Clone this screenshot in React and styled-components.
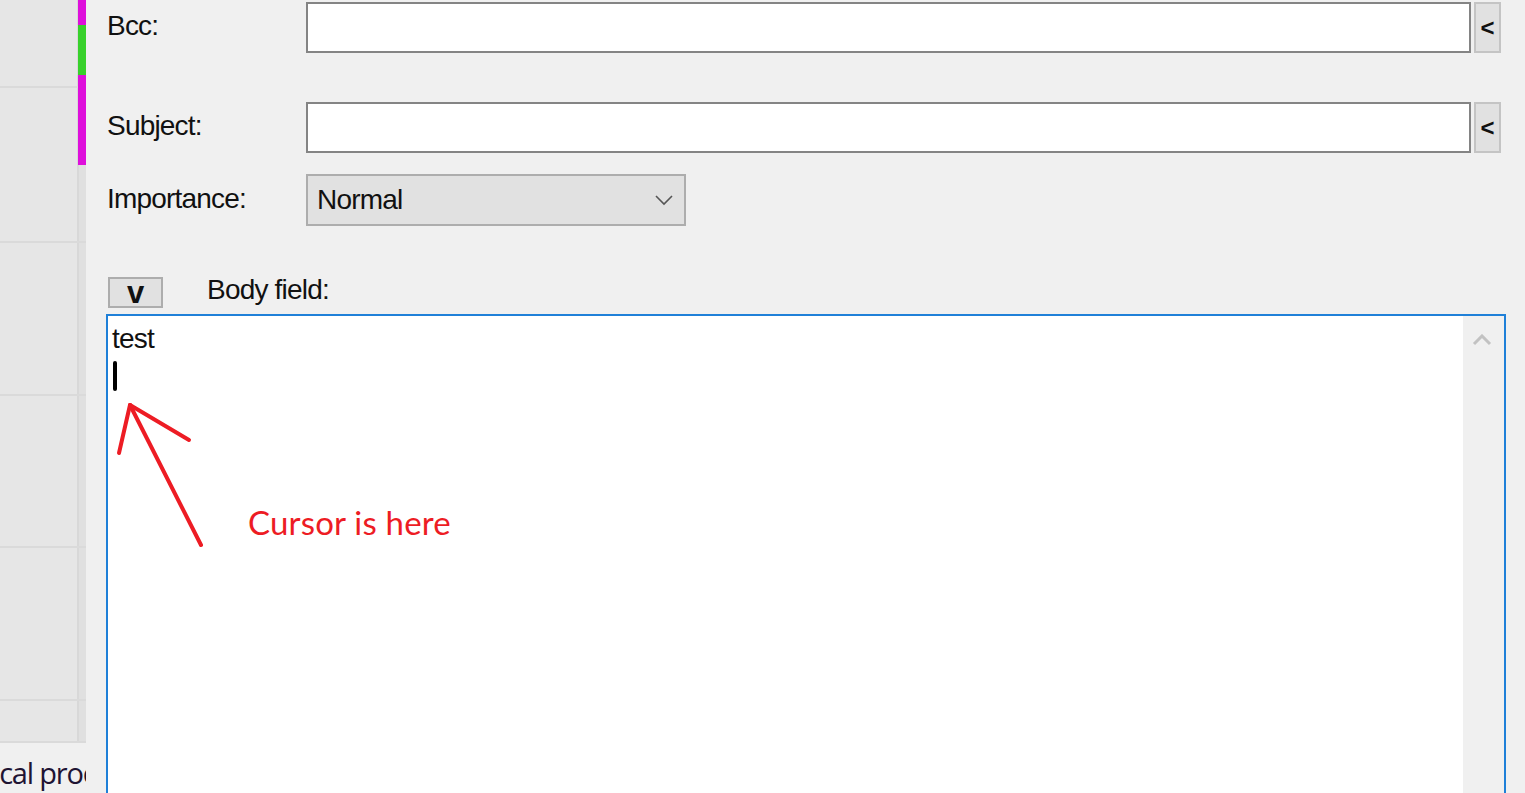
import React from "react";
import styled, { createGlobalStyle } from "styled-components";

const GlobalStyle = createGlobalStyle`
  html, body {
    margin: 0;
    padding: 0;
    background: #f0f0f0;
    overflow: hidden;
  }
`;

const Screen = styled.div`
  display: flex;
  width: 1525px;
  height: 793px;
  overflow: hidden;
  font-family: "Liberation Sans", Arial, sans-serif;
`;

const Sidebar = styled.div`
  position: relative;
  width: 86px;
  flex-shrink: 0;
  display: flex;
  flex-direction: column;
  background: #f0f0f0;
`;

const SideRow = styled.div`
  display: flex;
  height: ${({ h }) => h}px;
  border-bottom: 2px solid #dadada;
  box-sizing: border-box;
`;

const SideCell = styled.div`
  width: 77px;
  background: #e6e6e6;
`;

const SideEdge = styled.div`
  width: 9px;
  background: #e0e0e0;
  border-left: 2px solid #d8d8d8;
  box-sizing: border-box;
`;

const StatusMarks = styled.div`
  position: absolute;
  top: 0;
  left: 78px;
  width: 8px;
  display: flex;
  flex-direction: column;
`;

const Mark = styled.div`
  height: ${({ h }) => h}px;
  background: ${({ color }) => color};
`;

const SideFooter = styled.div`
  flex: 1;
  overflow: hidden;
  white-space: nowrap;
  font-family: "Open Sans", sans-serif;
  font-size: 29px;
  letter-spacing: -1.2px;
  line-height: 1;
  color: #1e1433;
  padding-top: 15px;
  span {
    display: inline-block;
    margin-left: -31px;
  }
`;

const Main = styled.div`
  flex: 1;
  display: flex;
  flex-direction: column;
  padding: 2px 19px 0 20px;
  background: #f0f0f0;
  min-width: 0;
`;

const FieldRow = styled.div`
  display: flex;
  align-items: center;
  margin-top: ${({ top }) => top || 0}px;
  height: ${({ h }) => h}px;
`;

const Label = styled.div`
  width: 200px;
  flex-shrink: 0;
  font-size: 28px;
  letter-spacing: -0.8px;
  color: #111;
  padding-left: 1px;
  margin-top: -3px;
  box-sizing: border-box;
`;

const TextBox = styled.div`
  width: 1165px;
  height: 100%;
  background: #fff;
  border: 2px solid #848484;
  box-sizing: border-box;
`;

const SideButton = styled.div`
  width: 27px;
  height: 100%;
  margin-left: 3px;
  background: #e1e1e1;
  border: 2px solid #c4c4c4;
  box-sizing: border-box;
  display: flex;
  align-items: center;
  justify-content: center;
  font-size: 24px;
  font-weight: bold;
  color: #111;
`;

const Dropdown = styled.div`
  width: 380px;
  height: 100%;
  background: #e1e1e1;
  border: 2px solid #adadad;
  box-sizing: border-box;
  display: flex;
  align-items: center;
  justify-content: space-between;
  padding: 0 10px 0 9px;
  font-size: 28px;
  letter-spacing: -0.8px;
  color: #111;
`;

const BodyHeader = styled.div`
  display: flex;
  align-items: center;
  margin-top: 51px;
  height: 31px;
  padding-left: 2px;
`;

const ToggleButton = styled.div`
  width: 55px;
  height: 31px;
  background: #e1e1e1;
  border: 2px solid #adadad;
  box-sizing: border-box;
  display: flex;
  align-items: center;
  justify-content: center;
  margin-right: 44px;
  font-size: 31px;
  font-weight: bold;
  line-height: 1;
  color: #111;
  padding-top: 0;
`;

const BodyLabel = styled.div`
  font-size: 28px;
  letter-spacing: -0.8px;
  color: #111;
  margin-top: -5px;
`;

const BodyBox = styled.div`
  position: relative;
  flex: 1;
  margin-top: 6px;
  display: flex;
  background: #fff;
  border: 2px solid #1f80d8;
  border-bottom: none;
  box-sizing: border-box;
`;

const BodyText = styled.div`
  flex: 1;
  padding: 8px 4px;
  font-size: 28px;
  letter-spacing: -0.8px;
  color: #111;
  line-height: 30px;
`;

const Caret = styled.div`
  width: 4px;
  height: 30px;
  margin: 7px 0 0 1px;
  background: #000;
  border-radius: 2px;
`;

const ScrollTrack = styled.div`
  width: 41px;
  background: #f0f0f0;
  display: flex;
  justify-content: center;
  padding: 18px 4px 0 0;
  box-sizing: border-box;
`;

const Annotation = styled.svg`
  position: absolute;
  left: 0;
  top: 0;
  overflow: visible;
  pointer-events: none;
`;

const Note = styled.div`
  position: absolute;
  left: 140px;
  top: 186px;
  font-family: Lato, "Open Sans", sans-serif;
  font-size: 33px;
  letter-spacing: 0.2px;
  color: #ed1c24;
  white-space: nowrap;
`;

const sideRows = [88, 155, 153, 152, 153, 42];

export default function App() {
  return (
    <>
      <GlobalStyle />
      <Screen>
        <Sidebar>
          {sideRows.map((h, i) => (
            <SideRow key={i} h={h}>
              <SideCell />
              <SideEdge />
            </SideRow>
          ))}
          <SideFooter>
            <span>Local process</span>
          </SideFooter>
          <StatusMarks>
            <Mark h={25} color="#de0fdb" />
            <Mark h={50} color="#37d12b" />
            <Mark h={90} color="#de0fdb" />
          </StatusMarks>
        </Sidebar>

        <Main>
          <FieldRow h={51}>
            <Label>Bcc:</Label>
            <TextBox />
            <SideButton>&lt;</SideButton>
          </FieldRow>

          <FieldRow h={51} top={49}>
            <Label>Subject:</Label>
            <TextBox />
            <SideButton>&lt;</SideButton>
          </FieldRow>

          <FieldRow h={52} top={21}>
            <Label>Importance:</Label>
            <Dropdown>
              <span>Normal</span>
              <svg width="20" height="12" viewBox="0 0 20 12">
                <path d="M2 2 L10 10 L18 2" fill="none" stroke="#555" strokeWidth="1.6" />
              </svg>
            </Dropdown>
          </FieldRow>

          <BodyHeader>
            <ToggleButton>v</ToggleButton>
            <BodyLabel>Body field:</BodyLabel>
          </BodyHeader>

          <BodyBox>
            <BodyText>
              test
              <Caret />
            </BodyText>
            <ScrollTrack>
              <svg width="20" height="12" viewBox="0 0 20 12">
                <path d="M2 10 L10 2 L18 10" fill="none" stroke="#c2c2c2" strokeWidth="3" />
              </svg>
            </ScrollTrack>
            <Annotation width="120" height="240">
              <g stroke="#ed1c24" strokeWidth="4" strokeLinecap="round" fill="none">
                <line x1="22" y1="89" x2="93" y2="229" />
                <line x1="22" y1="89" x2="11" y2="137" />
                <line x1="22" y1="89" x2="81" y2="124" />
              </g>
            </Annotation>
            <Note>Cursor is here</Note>
          </BodyBox>
        </Main>
      </Screen>
    </>
  );
}
